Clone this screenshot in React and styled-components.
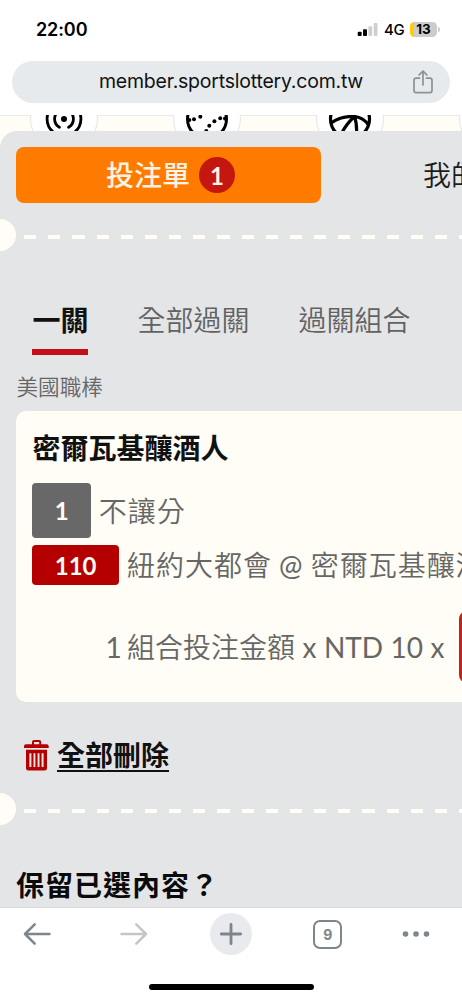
import React from 'react';
import styled, { createGlobalStyle } from 'styled-components';

const sans = '"Lato", "Noto Sans CJK TC", sans-serif';
const system = '"Inter", "Liberation Sans", sans-serif';

export default function App() {
    return (
        <>
        <Global />
        <Phone>
            <StatusBar>
                <Time>22:00</Time>
                <Status>
                    <Signal />
                    <Network>4G</Network>
                    <Battery><Level>13</Level></Battery>
                    <BatteryTip />
                </Status>
            </StatusBar>
            <AddressBar>
                <Address>
                    <Url>member.sportslottery.com.tw</Url>
                    <ShareIcon />
                </Address>
            </AddressBar>
            <Page>
                <Sports>
                    <Sport><RadioIcon /></Sport>
                    <Sport><BaseballIcon /></Sport>
                    <Sport><BasketballIcon /></Sport>
                    <Sport />
                </Sports>
                <Slip>
                    <SlipTabs>
                        <ActiveTab>投注單<Count>1</Count></ActiveTab>
                        <OtherTab>我的</OtherTab>
                    </SlipTabs>
                    <Tear />
                    <Modes>
                        <Mode $active>一關</Mode>
                        <Mode>全部過關</Mode>
                        <Mode>過關組合</Mode>
                    </Modes>
                    <League>美國職棒</League>
                    <Card>
                        <Team>密爾瓦基釀酒人</Team>
                        <Line $height={55}>
                            <Tag>1</Tag>
                            <Label $gap={8}>不讓分</Label>
                        </Line>
                        <Line $height={40} $top={7}>
                            <Tag $red>110</Tag>
                            <Label $gap={8}>紐約大都會<Latin $space={-1}> @ </Latin>密爾瓦基釀酒人</Label>
                        </Line>
                        <Stake>
                            <StakeText><Latin $space={-1.8}>1 </Latin>組合投注金額<Latin $space={0.3}> x NTD 10 x</Latin></StakeText>
                            <StakeInput />
                        </Stake>
                    </Card>
                    <Remove>
                        <TrashIcon />
                        <RemoveText>全部刪除</RemoveText>
                    </Remove>
                    <Tear />
                    <Keep>保留已選內容？</Keep>
                </Slip>
            </Page>
            <Toolbar>
                <Tool><ArrowIcon color="#7d868c" /></Tool>
                <Tool><ArrowIcon color="#c6c6c6" flip /></Tool>
                <Tool>
                    <NewTab>
                        <svg width="24" height="24" viewBox="0 0 24 24" stroke="#7d868c" strokeWidth="2.8" strokeLinecap="round">
                            <path d="M12 2.3v19.4M2.3 12h19.4" />
                        </svg>
                    </NewTab>
                </Tool>
                <Tool><TabCount>9</TabCount></Tool>
                <Tool>
                    <svg width="28" height="8" viewBox="0 0 28 8" fill="#7d868c">
                        <circle cx="3.5" cy="4" r="2.8" />
                        <circle cx="14" cy="4" r="2.8" />
                        <circle cx="24.5" cy="4" r="2.8" />
                    </svg>
                </Tool>
            </Toolbar>
            <HomeArea><HomeBar /></HomeArea>
        </Phone>
        </>
    )
}

const Signal = () => (
    <svg width="21" height="15" viewBox="0 0 21 15">
        <rect x="0.7" y="9.8" width="4" height="4.2" rx="1" fill="#000" />
        <rect x="6" y="7.3" width="4" height="6.7" rx="1" fill="#000" />
        <rect x="11.4" y="4.3" width="3.8" height="9.7" rx="1" fill="#cfcfcf" />
        <rect x="16.7" y="1" width="3.8" height="13" rx="1" fill="#cfcfcf" />
    </svg>
);

const ShareIcon = () => (
    <svg width="20" height="24" viewBox="0 0 20 24" fill="none" stroke="#8b9297" strokeWidth="1.7" strokeLinecap="round" strokeLinejoin="round">
        <path d="M6.5 8.2H3.2a2.2 2.2 0 0 0-2.2 2.2v10a2.2 2.2 0 0 0 2.2 2.2h13.6a2.2 2.2 0 0 0 2.2-2.2v-10a2.2 2.2 0 0 0-2.2-2.2h-3.3" />
        <path d="M10 15V1.2M6.2 4.8 10 1l3.8 3.8" />
    </svg>
);

const RadioIcon = () => (
    <svg width="44" height="44" viewBox="-22 -22 44 44" fill="none" stroke="#000" strokeWidth="2.8">
        <circle r="3" fill="#000" stroke="none" />
        <path d="M-4.6 8.2A9.4 9.4 0 0 1-4.6-8.2M4.6 8.2A9.4 9.4 0 0 0 4.6-8.2" strokeLinecap="round" />
        <path d="M-11 12.9A17 17 0 0 1-11-12.9M11 12.9A17 17 0 0 0 11-12.9" />
    </svg>
);

const BaseballIcon = () => (
    <svg width="44" height="44" viewBox="-22 -22 44 44" fill="none" stroke="#000" strokeWidth="3">
        <circle r="19.5" />
        <g fill="#000" stroke="none">
            <circle cx="-17.7" cy="1" r="2" />
            <circle cx="-13" cy="0.3" r="2" />
            <circle cx="-6.7" cy="-2.3" r="2" />
            <circle cx="-3" cy="-7" r="2" />
            <circle cx="2.3" cy="6.7" r="2" />
            <circle cx="7.4" cy="2.3" r="2" />
            <circle cx="13.2" cy="-0.8" r="2" />
            <circle cx="18" cy="-0.4" r="2" />
            <circle cx="-0.7" cy="12" r="2" />
        </g>
    </svg>
);

const BasketballIcon = () => (
    <svg width="44" height="44" viewBox="-22 -22 44 44" fill="none" stroke="#000" strokeWidth="3.2">
        <circle r="19.5" />
        <path d="M-19 4C-13 0-5-3 4-2.5 11-2 15 1 18.5 6" />
        <path d="M-8 13.5C-5 8 0 1.5 4.5-2.5M4.5-16V-2.5C6.5 3 7 9 6.5 17" />
    </svg>
);

const TrashIcon = () => (
    <svg width="25" height="31" viewBox="0 0 25 31" fill="#b50000">
        <path d="M0 8V6.2Q0 4.2 2 4.2h6V2q0-2 2-2h5.2q2 0 2 2v2.2h5.5q2 0 2 2V8zM10 4.2h5.2V2H10z" fillRule="evenodd" />
        <path d="M2 9.8h21v18.4q0 2.3-2.3 2.3H4.3Q2 30.5 2 28.2zM5.4 13.2v13.8h2V13.2zM9.5 13.2v13.8h1.9V13.2zM13.6 13.2v13.8h1.9V13.2zM17.6 13.2v13.8h2V13.2z" fillRule="evenodd" />
    </svg>
);

const ArrowIcon = ({ color, flip }) => (
    <svg width="28" height="24" viewBox="0 0 28 24" fill="none" stroke={color} strokeWidth="2.5" strokeLinecap="round" strokeLinejoin="round">
        <path d={flip ? "M1.5 12h24.5M16.3 2.3 26 12l-9.7 9.7" : "M26.5 12H2M11.7 2.3 2 12l9.7 9.7"} />
    </svg>
);

const Global = createGlobalStyle`
    * { box-sizing: border-box; }
    body { margin: 0; background: #fff; }
    svg { display: block; flex: none; }`;
const Phone = styled.div`
    width: 462px;
    height: 1000px;
    overflow: hidden;
    display: flex;
    flex-direction: column;
    background: #fff;
    font-family: ${system};`;
const StatusBar = styled.div`
    height: 61px;
    padding: 0 22px 2px 36px;
    display: flex;
    justify-content: space-between;
    align-items: center;`;
const Time = styled.div`
    font-size: 18px;
    font-weight: 600;
    line-height: 22px;
    letter-spacing: -0.1px;`;
const Status = styled.div`
    display: flex;
    align-items: center;`;
const Network = styled.div`
    margin-left: 6px;
    width: 26px;
    font-size: 15px;
    font-weight: 500;
    letter-spacing: -0.3px;`;
const Battery = styled.div`
    width: 27px;
    height: 15px;
    border-radius: 4.5px;
    background: linear-gradient(90deg, #ffcc00 4px, #cccccc 4px);
    display: flex;
    justify-content: center;
    align-items: center;`;
const Level = styled.span`
    font-size: 13.5px;
    font-weight: 700;
    line-height: 15px;`;
const BatteryTip = styled.div`
    width: 2px;
    height: 5px;
    margin-left: 1px;
    border-radius: 0 2px 2px 0;
    background: #cccccc;`;
const AddressBar = styled.div`
    height: 54px;
    padding: 0 12px;
    flex: none;`;
const Address = styled.div`
    height: 42px;
    padding: 0 17px 0 87px;
    border-radius: 21px;
    background: #e6eaed;
    display: flex;
    justify-content: space-between;
    align-items: center;`;
const Url = styled.div`
    padding-bottom: 2px;
    font-size: 19.5px;
    line-height: 24px;
    letter-spacing: -0.22px;
    color: #111;
    white-space: nowrap;`;
const Page = styled.main`
    height: 792px;
    flex: none;
    overflow: hidden;
    background: linear-gradient(180deg, #e9e9e6 1px, #fffdf5 1px);
    font-family: ${sans};`;
const Sports = styled.div`
    width: 570px;
    height: 16px;
    padding-left: 30px;
    display: flex;
    align-items: center;
    gap: 75.5px;`;
const Sport = styled.div`
    width: 67.5px;
    height: 67.5px;
    margin-top: -9px;
    flex: none;
    border: 1.5px solid #e5e5e7;
    border-radius: 50%;
    background: #fff;
    display: flex;
    justify-content: center;
    align-items: center;`;
const Slip = styled.section`
    position: relative;
    height: 776px;
    padding-top: 16px;
    border-top-left-radius: 17px;
    background: #e4e5e7;`;
const SlipTabs = styled.div`
    width: 626px;
    height: 56px;
    padding-left: 16px;
    display: flex;
    font-size: 28px;`;
const ActiveTab = styled.div`
    width: 305px;
    border-radius: 8px;
    background: #ff7b00;
    color: #fff3e6;
    font-weight: 500;
    line-height: 36px;
    display: flex;
    justify-content: center;
    align-items: center;
    gap: 9px;
    padding-left: 4px;`;
const Count = styled.span`
    width: 36px;
    height: 36px;
    border-radius: 50%;
    background: #c4170f;
    font-size: 24px;
    font-weight: 700;
    line-height: 37px;
    text-align: center;`;
const OtherTab = styled.div`
    padding-left: 102px;
    color: #1c1c1c;
    font-weight: 350;
    line-height: 56px;`;
const Tear = styled.div`
    height: 32px;
    margin-top: 16px;
    display: flex;
    align-items: center;
    &:before {
        content: "";
        width: 16px;
        height: 32px;
        border-radius: 0 16px 16px 0;
        background: #fffdf5;
    }
    &:after {
        content: "";
        flex: 1;
        height: 4.4px;
        margin: 4.5px 0 0 8px;
        background: repeating-linear-gradient(90deg, #fffdf5 0 12.2px, transparent 12.2px 24.17px);
    }`;
const Modes = styled.div`
    margin: 38px 0 0 32.4px;
    height: 65.5px;
    display: flex;
    gap: 49px;`;
const Mode = styled.div`
    height: 65.5px;
    font-size: 28px;
    line-height: 62px;
    white-space: nowrap;
    font-weight: ${p => p.$active ? 700 : 350};
    color: ${p => p.$active ? '#111' : '#626262'};
    border-bottom: 6px solid ${p => p.$active ? '#c31016' : 'transparent'};`;
const League = styled.div`
    height: 56.5px;
    padding: 16px 0 0 16.5px;
    font-size: 21.6px;
    font-weight: 350;
    line-height: 32px;
    color: #666;`;
const Card = styled.div`
    width: 600px;
    height: 291px;
    margin-left: 16px;
    padding: 12px 0 0 16.4px;
    border-radius: 10px;
    background: #fffdf5;`;
const Team = styled.div`
    height: 60px;
    font-size: 28px;
    font-weight: 700;
    line-height: 50px;
    color: #111;`;
const Line = styled.div`
    height: ${p => p.$height}px;
    margin-top: ${p => p.$top || 0}px;
    display: flex;
    align-items: center;`;
const Tag = styled.div`
    height: 100%;
    width: ${p => p.$red ? 86.5 : 58.4}px;
    border-radius: 4px;
    background: ${p => p.$red ? '#b50000' : '#686868'};
    color: #fffdf5;
    font-size: 24px;
    font-weight: 700;
    display: flex;
    justify-content: center;
    align-items: center;`;
const Label = styled.div`
    margin-left: ${p => p.$gap}px;
    font-size: 28px;
    font-weight: 350;
    letter-spacing: 1px;
    line-height: 40px;
    color: #666;
    white-space: nowrap;`;
const Latin = styled.span`
    font-weight: 400;
    word-spacing: ${p => p.$space}px;`;
const Stake = styled.div`
    margin-top: 26px;
    padding-left: 73px;
    height: 72px;
    display: flex;
    align-items: center;`;
const StakeText = styled.div`
    width: 353.6px;
    font-size: 28px;
    font-weight: 350;
    line-height: 40px;
    color: #666;
    white-space: nowrap;`;
const StakeInput = styled.div`
    width: 120px;
    height: 72px;
    border: 3px solid #c4221b;
    border-radius: 8px;`;
const Remove = styled.div`
    height: 75px;
    padding: 32px 0 0 24px;
    display: flex;
    align-items: center;
    gap: 8px;`;
const RemoveText = styled.span`
    height: 33px;
    font-size: 28px;
    font-weight: 700;
    line-height: 32px;
    color: #111;
    border-bottom: 2px solid #111;`;
const Keep = styled.div`
    padding: 40px 0 0 16px;
    font-size: 28px;
    font-weight: 700;
    line-height: 40px;
    letter-spacing: 1px;
    color: #0b0b0b;`;
const Toolbar = styled.nav`
    height: 54px;
    flex: none;
    padding-bottom: 1px;
    border-top: 1px solid #d8d8d8;
    display: flex;
    margin: 0 -11px;`;
const Tool = styled.div`
    flex: 1 1 0;
    display: flex;
    justify-content: center;
    align-items: center;
    &:last-child > svg {
        margin-right: 18px;
    }`;
const NewTab = styled.div`
    width: 42px;
    height: 42px;
    border-radius: 50%;
    background: #e8eaee;
    display: flex;
    justify-content: center;
    align-items: center;`;
const TabCount = styled.div`
    width: 29px;
    height: 29px;
    border: 2.5px solid #7d868c;
    border-radius: 7px;
    color: #7d868c;
    font-size: 14px;
    font-weight: 700;
    line-height: 25px;
    text-align: center;`;
const HomeArea = styled.div`
    padding-top: 23px;
    display: flex;
    justify-content: center;`;
const HomeBar = styled.div`
    width: 165px;
    height: 6px;
    border-radius: 3px;
    background: #000;`;
